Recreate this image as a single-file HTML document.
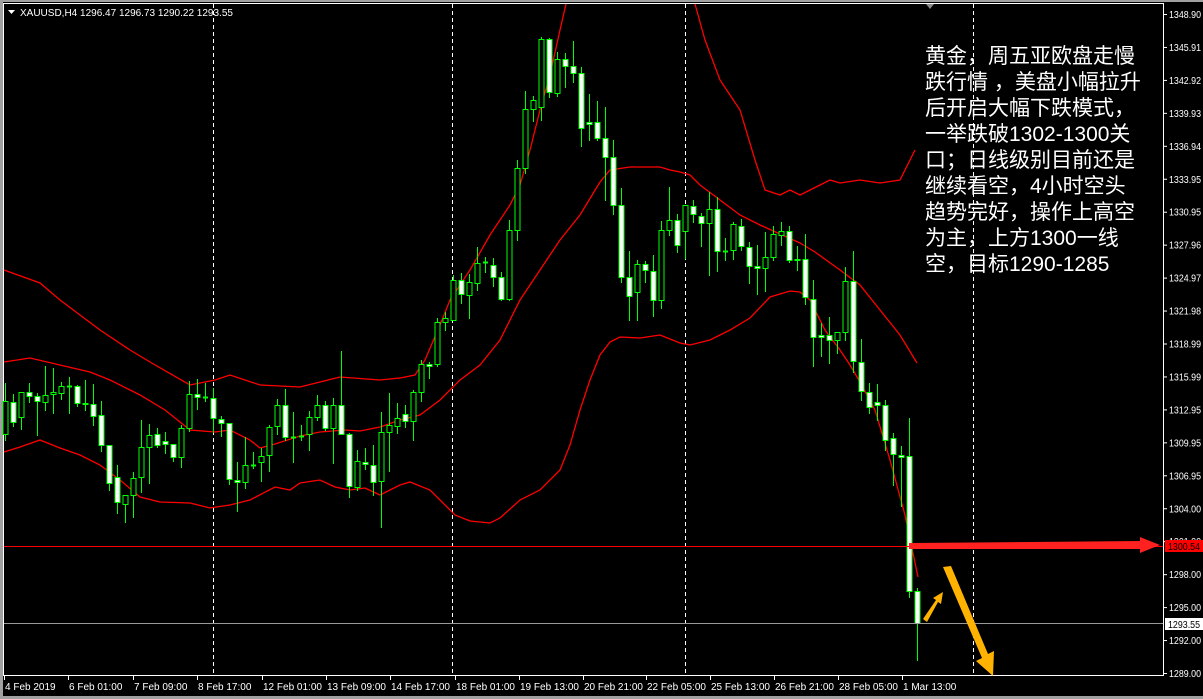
<!DOCTYPE html>
<html><head><meta charset="utf-8"><style>
html,body{margin:0;padding:0;background:#000;width:1203px;height:699px;overflow:hidden}
svg{display:block}
.t{font-family:"Liberation Sans",sans-serif;font-size:10px;fill:#fff}
.cn{position:absolute;left:925px;top:44px;color:#fff;font-family:"Liberation Sans","Noto Sans CJK SC",sans-serif;font-size:21px;line-height:26px;white-space:pre}
</style></head><body>
<svg id="s" width="1203" height="699" xmlns="http://www.w3.org/2000/svg">
<rect x="0" y="0" width="1203" height="699" fill="#000"/>
<rect x="0" y="0" width="3" height="699" fill="#a0a0a0"/>
<rect x="0" y="0" width="1203" height="2" fill="#a0a0a0"/>
<rect x="0" y="696" width="1203" height="3" fill="#a0a0a0"/>
<line x1="3.5" y1="3" x2="3.5" y2="676" stroke="#fff"/>
<line x1="3" y1="3.5" x2="1164" y2="3.5" stroke="#fff"/>
<line x1="1163.5" y1="3" x2="1163.5" y2="676" stroke="#fff"/>
<line x1="3" y1="675.5" x2="1164" y2="675.5" stroke="#fff"/>
<g stroke="#fff" stroke-dasharray="4,3">
<line x1="213.5" y1="4" x2="213.5" y2="675"/><line x1="452.5" y1="4" x2="452.5" y2="675"/>
<line x1="685.5" y1="4" x2="685.5" y2="675"/><line x1="973.5" y1="4" x2="973.5" y2="675"/>
</g>
<g id="bands" fill="none" stroke="#ff0000" stroke-width="1.3"></g>
<g id="candles"></g>
<line x1="4" y1="546.5" x2="1163" y2="546.5" stroke="#ff0000"/>
<line x1="4" y1="623.5" x2="1163" y2="623.5" stroke="#9a9a9a"/>
<polygon points="909,543 1140,541 1140,537 1160,545 1140,553 1140,549 909,549" fill="#ff2020"/>
<polygon points="923,619 936,600 933,598 943,592 941,604 938,602 927,622" fill="#ffb300"/>
<polygon points="943,567 951,566 988,654 994,651 993,676 976,661 982,658" fill="#ffb300"/>
<polygon points="926,4 934,4 930,9" fill="#888"/>
<text class="t" x="20" y="16">XAUUSD,H4  1296.47 1296.73 1290.22 1293.55</text>
<polygon points="8,10 15,10 11.5,14" fill="#fff"/>
<g id="axis"></g>
</svg>
<div class="cn">黄金，周五亚欧盘走慢
跌行情 ，美盘小幅拉升
后开启大幅下跌模式，
一举跌破1302-1300关
口；日线级别目前还是
继续看空，4小时空头
趋势完好，操作上高空
为主，上方1300一线
空，目标1290-1285</div>
<script>
var NS="http://www.w3.org/2000/svg";
function el(p,n,a,txt){var e=document.createElementNS(NS,n);for(var k in a)e.setAttribute(k,a[k]);if(txt)e.textContent=txt;p.appendChild(e);return e;}
var C=[
[401,434,'b',383,440],[402,422,'w',394,426],[392,417,'b',392,429],[392,396,'w',383,402],[396,401,'w',393,435],
[395,402,'b',366,410],[392,394,'b',368,413],[386,393,'b',382,399],[386,386,'d',377,413],[386,403,'w',385,406],
[403,404,'w',380,410],[404,416,'w',384,425],[415,445,'w',401,451],[445,483,'w',445,490],[477,502,'w',465,513],
[495,504,'b',495,522],[478,495,'b',472,517],[447,477,'b',420,492],[435,447,'b',424,483],[434,445,'w',428,447],
[441,444,'w',432,453],[444,457,'w',444,461],[428,457,'b',425,467],[394,428,'b',381,431],[394,397,'w',379,409],
[397,397,'d',383,401],[398,418,'w',388,432],[419,423,'w',416,436],[423,479,'w',423,484],[480,482,'w',462,511],
[465,482,'b',437,488],[465,465,'d',452,468],[456,462,'b',448,481],[427,455,'b',425,471],[405,426,'b',399,434],
[405,437,'w',389,440],[437,437,'d',412,462],[436,436,'d',425,440],[417,434,'b',411,450],[405,417,'b',395,420],
[405,428,'w',401,430],[405,428,'b',398,463],[405,434,'w',351,434],[434,486,'w',433,497],[461,487,'b',450,490],
[462,464,'w',448,469],[465,482,'w',445,495],[432,481,'b',412,527],[425,432,'b',393,471],[418,426,'b',403,433],
[414,421,'w',405,427],[392,421,'b',390,440],[364,392,'b',360,401],[364,366,'w',362,378],[322,364,'b',318,366],
[318,322,'b',312,330],[280,320,'b',275,320],[280,294,'w',273,303],[282,295,'b',274,318],[263,283,'b',247,290],
[262,262,'d',257,272],[265,277,'w',258,286],[277,299,'w',272,300],[230,299,'b',220,300],[168,230,'b',160,240],
[109,168,'b',91,173],[100,109,'b',96,121],[39,107,'b',37,120],[39,92,'w',38,97],[59,93,'b',52,96],
[59,66,'w',53,87],[66,73,'w',41,82],[73,128,'w',67,146],[122,124,'w',94,140],[122,138,'w',101,140],
[138,157,'w',107,200],[157,205,'w',140,214],[205,277,'w',188,282],[277,296,'w',251,320],[264,292,'b',260,320],
[264,270,'w',261,282],[271,300,'w',255,316],[230,300,'b',221,308],[220,230,'b',187,235],[220,245,'w',214,252],
[205,231,'b',205,258],[206,214,'w',200,222],[216,223,'w',213,246],[209,223,'b',192,275],[209,251,'w',197,271],
[251,251,'d',238,260],[224,250,'b',222,259],[226,246,'w',219,250],[247,266,'w',242,283],[266,268,'w',245,294],
[257,268,'b',232,291],[234,257,'b',226,260],[231,235,'b',222,245],[231,260,'w',226,262],[259,260,'w',246,270],
[259,297,'w',234,304],[299,337,'w',280,366],[335,337,'w',323,356],[335,340,'w',317,363],[332,340,'b',332,353],
[281,332,'b',267,340],[281,361,'w',251,372],[362,391,'w',339,400],[392,407,'w',383,413],[402,405,'w',384,420],
[405,440,'w',400,450],[438,454,'w',433,485],[455,457,'w',446,506],[456,591,'w',418,597],[591,623,'w',588,660]];
var g=document.getElementById('candles');
C.forEach(function(c,i){var x=5+8*i;
 el(g,'line',{x1:x+.5,y1:c[3],x2:x+.5,y2:c[4]+1,stroke:'#00ff00'});
 if(c[2]=='d'||c[1]-c[0]<1){el(g,'line',{x1:x-2,y1:c[0]+.5,x2:x+3,y2:c[0]+.5,stroke:'#00ff00',"stroke-width":2});}
 else el(g,'rect',{x:x-2,y:c[0]+.5,width:5,height:c[1]-c[0],fill:c[2]=='w'?'#fff':'#000',stroke:'#00ff00'});
});
var B=document.getElementById('bands');
function pl(p){el(B,'polyline',{points:p});}
pl("4,270 40,283 60,300 100,330 130,350 150,362 190,385 215,380 230,375 260,385 300,387 340,377 380,380 400,378 415,375 425,360 440,325 450,300 470,270 490,235 510,205 520,185 530,150 540,110 550,75 560,30 566,4");
pl("695,4 705,40 720,80 740,110 755,160 765,190 780,195 790,190 800,195 810,190 830,180 840,183 860,180 880,183 900,180 915,150");
pl("4,362 30,358 60,365 90,372 110,380 140,395 165,410 190,430 215,432 230,430 250,440 260,448 275,444 300,436 320,432 345,430 360,431 380,427 400,420 420,415 440,400 460,380 480,365 500,340 520,300 540,270 560,240 580,215 600,182 610,170 630,167 660,167 670,170 680,172 690,175 700,185 720,200 740,215 760,225 780,234 800,243 815,252 840,270 860,285 880,310 900,335 917,363");
pl("4,452 20,447 40,440 60,448 80,455 100,465 120,480 140,497 160,502 190,503 210,508 230,505 250,500 275,487 290,490 300,483 320,480 335,487 350,490 365,488 380,495 400,485 410,482 430,490 440,500 455,515 470,521 490,523 500,518 520,500 540,490 560,470 570,445 580,410 590,380 600,355 610,342 620,337 640,338 660,335 680,343 690,345 710,340 730,330 750,318 770,297 790,291 800,292 810,300 825,330 840,350 850,365 860,382 875,410 890,460 905,515 918,577");
var A=document.getElementById('axis');
var P=["1348.90","1345.91","1342.92","1339.93","1336.94","1333.95","1330.95","1327.96","1324.97","1321.98","1318.99","1315.99","1312.95","1309.95","1306.95","1304.00","1301.00","1298.00","1295.00","1292.00","1289.00"];
P.forEach(function(p,i){var y=14+i*32.95;
 el(A,'line',{x1:1163,y1:y+.5,x2:1167,y2:y+.5,stroke:'#fff'});
 el(A,'text',{x:1169,y:y+4,"class":'t',textLength:32,lengthAdjust:'spacingAndGlyphs'},p);});
el(A,'rect',{x:1165,y:540,width:38,height:12,fill:'#ff0000'});
el(A,'text',{x:1168,y:550,"class":'t',style:'fill:#000',textLength:32,lengthAdjust:'spacingAndGlyphs'},"1300.54");
el(A,'rect',{x:1165,y:618,width:38,height:12,fill:'#fff'});
el(A,'text',{x:1168,y:628,"class":'t',style:'fill:#000',textLength:32,lengthAdjust:'spacingAndGlyphs'},"1293.55");
var T=[[4,"4 Feb 2019"],[68,"6 Feb 01:00"],[133,"7 Feb 09:00"],[197,"8 Feb 17:00"],[262,"12 Feb 01:00"],[326,"13 Feb 09:00"],[390,"14 Feb 17:00"],[455,"18 Feb 01:00"],[519,"19 Feb 13:00"],[583,"20 Feb 21:00"],[646,"22 Feb 05:00"],[710,"25 Feb 13:00"],[774,"26 Feb 21:00"],[838,"28 Feb 05:00"],[902,"1 Mar 13:00"]];
T.forEach(function(t){el(A,'line',{x1:t[0]+.5,y1:676,x2:t[0]+.5,y2:680,stroke:'#fff'});
 el(A,'text',{x:t[0]+1,y:690,"class":'t'},t[1]);});
</script>
</body></html>
